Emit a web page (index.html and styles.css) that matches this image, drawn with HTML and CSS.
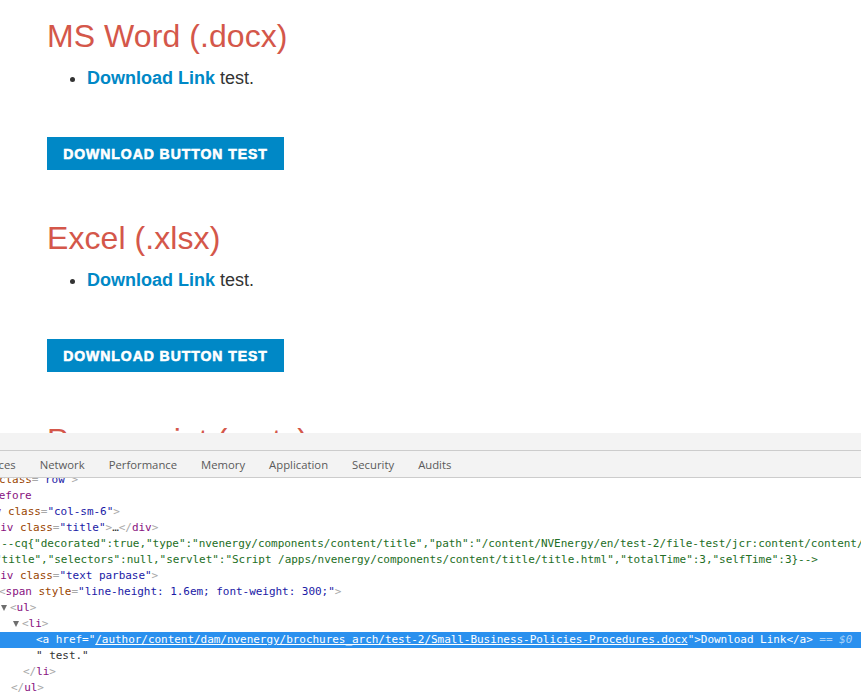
FILE: index.html
```html
<!DOCTYPE html>
<html lang="en">
<head>
    <meta charset="UTF-8">
    <title>File test</title>
    <link rel="stylesheet" href="styles.css">
</head>
<body>
    <div class="page">
        <section class="file-block">
            <h2>MS Word (.docx)</h2>
            <ul>
                <li><a href="#">Download Link</a> test.</li>
            </ul>
            <a class="download-button" href="#">Download button test</a>
        </section>
        <section class="file-block">
            <h2>Excel (.xlsx)</h2>
            <ul>
                <li><a href="#">Download Link</a> test.</li>
            </ul>
            <a class="download-button" href="#">Download button test</a>
        </section>
        <section class="file-block">
            <h2>Powerpoint (.pptx)</h2>
        </section>
    </div>

    <div class="devtools">
        <div class="toolbar"></div>
        <div class="tabs">
            <span class="tab tab-cut">Sources</span>
            <span class="tab">Network</span>
            <span class="tab">Performance</span>
            <span class="tab">Memory</span>
            <span class="tab">Application</span>
            <span class="tab">Security</span>
            <span class="tab">Audits</span>
        </div>
        <div class="elements">
            <div class="row in-row"><b>&lt;</b><i>div</i> <u>class</u><b>=</b><s>"row"</s><b>&gt;</b></div>
            <div class="row in-before"><i>::before</i></div>
            <div class="row in-col"><b>&lt;</b><i>div</i> <u>class</u><b>=</b><s>"col-sm-6"</s><b>&gt;</b></div>
            <div class="row in-title"><b>&lt;</b><i>div</i> <u>class</u><b>=</b><s>"title"</s><b>&gt;</b>…<b>&lt;/</b><i>div</i><b>&gt;</b></div>
            <div class="row in-comment"><em>&lt;!--cq{"decorated":true,"type":"nvenergy/components/content/title","path":"/content/NVEnergy/en/test-2/file-test/jcr:content/content/title"</em></div>
            <div class="row in-comment-2"><em>"title","selectors":null,"servlet":"Script /apps/nvenergy/components/content/title/title.html","totalTime":3,"selfTime":3}--&gt;</em></div>
            <div class="row in-title"><b>&lt;</b><i>div</i> <u>class</u><b>=</b><s>"text parbase"</s><b>&gt;</b></div>
            <div class="row in-span"><b>&lt;</b><i>span</i> <u>style</u><b>=</b><s>"line-height: 1.6em; font-weight: 300;"</s><b>&gt;</b></div>
            <div class="row in-1"><span class="arrow"></span><b>&lt;</b><i>ul</i><b>&gt;</b></div>
            <div class="row in-2"><span class="arrow"></span><b>&lt;</b><i>li</i><b>&gt;</b></div>
            <div class="row in-3 selected">&lt;a href="<span class="link">/author/content/dam/nvenergy/brochures_arch/test-2/Small-Business-Policies-Procedures.docx</span>"&gt;Download Link&lt;/a&gt; <span class="dollar">== $0</span></div>
            <div class="row in-3">" test."</div>
            <div class="row in-2"><b>&lt;/</b><i>li</i><b>&gt;</b></div>
            <div class="row in-1"><b>&lt;/</b><i>ul</i><b>&gt;</b></div>
        </div>
    </div>
</body>
</html>
```

FILE: styles.css
```css
html, body {
    margin: 0;
    padding: 0;
}

body {
    font-family: "Liberation Sans", Arial, sans-serif;
    background: #fff;
    overflow: hidden;
    height: 697px;
}

.page {
    height: 433px;
    overflow: hidden;
    padding-left: 47px;
}

.file-block {
    height: 202px;
    padding-top: 18px;
    box-sizing: border-box;
}

h2 {
    margin: 0;
    font-size: 32px;
    line-height: 36px;
    font-weight: 400;
    letter-spacing: 0.07px;
    color: #d4574a;
}

.file-block ul {
    margin: 10px 0 0;
    padding-left: 40px;
    font-size: 18px;
    line-height: 29px;
    color: #333;
}

.file-block li a {
    color: #0088c6;
    font-weight: 700;
    text-decoration: none;
}

.download-button {
    display: block;
    width: 237px;
    height: 33px;
    margin-top: 44px;
    background: #0088c6;
    color: #fff;
    font-size: 14px;
    line-height: 35px;
    font-weight: 700;
    text-align: center;
    text-decoration: none;
    text-transform: uppercase;
    letter-spacing: 0.95px;
    -webkit-text-stroke: 0.6px #fff;
}

.devtools {
    height: 264px;
    overflow: hidden;
}

.toolbar {
    height: 17px;
    background: #f3f3f3;
    border-bottom: 1px solid #ccc;
}

.tabs {
    display: flex;
    height: 26px;
    background: #f3f3f3;
    border-bottom: 1px solid #ccc;
    padding-left: 40px;
    gap: 24px;
    font-family: "Open Sans", sans-serif;
    font-size: 11.3px;
    line-height: 27px;
    color: #5a5a5a;
    overflow: hidden;
}

.tab-cut {
    margin-left: -66px;
}

.elements {
    height: 219px;
    overflow: hidden;
    font-family: "DejaVu Sans Mono", monospace;
    font-size: 11px;
    line-height: 16px;
    letter-spacing: -0.04px;
    color: #333;
}

.row {
    height: 16px;
    white-space: pre;
}

.row:first-child {
    margin-top: -6px;
}

.row b {
    font-weight: 400;
    color: #a8a8a8;
}

.row i {
    font-style: normal;
    color: #881280;
}

.row u {
    text-decoration: none;
    color: #994500;
}

.row s {
    text-decoration: none;
    color: #1a1aa6;
}

.row em {
    font-style: normal;
    color: #236e25;
}

.in-row { margin-left: -34px; }
.in-before { margin-left: -21px; }
.in-col { margin-left: -25px; }
.in-title { margin-left: -13px; }
.in-comment { margin-left: -12px; }
.in-comment-2 { margin-left: -5px; }
.in-span { margin-left: -1px; }
.in-1 { padding-left: 11px; }
.in-2 { padding-left: 23px; }
.in-3 { padding-left: 36px; }

.arrow {
    display: inline-block;
    width: 0;
    height: 0;
    margin-left: -10px;
    margin-right: 3px;
    border-left: 3.5px solid transparent;
    border-right: 3.5px solid transparent;
    border-top: 6px solid #6e6e6e;
}

.selected {
    background: #2a90ee;
    color: #fff;
}

.link {
    text-decoration: underline;
}

.dollar {
    font-style: italic;
    color: #a9d2f8;
}
```
